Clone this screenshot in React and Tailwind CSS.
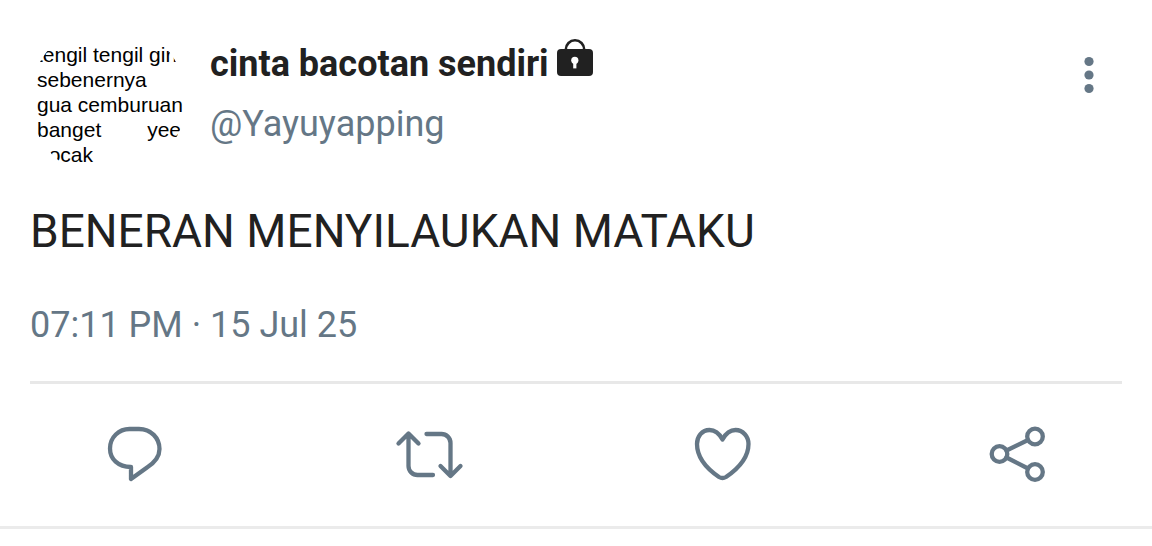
function Avatar() {
  return (
    <div className="size-[156px] shrink-0 overflow-hidden rounded-full bg-white pt-5 pl-[7px] font-['Liberation_Sans',Arial,sans-serif] text-[21px] leading-[25px] whitespace-nowrap text-black">
      <p>tengil tengil girl</p>
      <p>sebenernya</p>
      <p>gua cemburuan</p>
      <p className="flex w-36 justify-between">
        <span>banget</span>
        <span>yee</span>
      </p>
      <p>bocak</p>
    </div>
  );
}

function LockIcon() {
  return (
    <svg viewBox="0 0 36 38" className="h-[38px] w-9" role="img" aria-label="Protected account">
      <path d="M8.8 12V10.5a9.2 9.2 0 0 1 18.400 0V12" fill="none" stroke="#212121" strokeWidth="2.6" />
      <rect x="0" y="10" width="36" height="27" rx="4" fill="#212121" />
      <circle cx="17.8" cy="21.3" r="3.6" fill="#fff" />
      <path d="M16.2 22h3.2v7.4h-3.2z" fill="#fff" />
    </svg>
  );
}

function Action({ label, children }) {
  return (
    <button type="button" aria-label={label} className="text-[#657786]">
      <svg
        viewBox="0 0 60 60"
        className="size-[60px] overflow-visible"
        fill="none"
        stroke="currentColor"
        strokeWidth="4.3"
        strokeLinecap="round"
        strokeLinejoin="round"
      >
        {children}
      </svg>
    </button>
  );
}

export default function App() {
  return (
    <main className="bg-white font-[Roboto,sans-serif] text-[#212121]">
      <article className="border-b-3 border-[#ebebeb]">
        <div className="px-[30px] pt-[22px]">
          <header className="flex items-start gap-6">
            <Avatar />
            <div className="min-w-0 flex-1 pt-[17px]">
              <div className="flex items-start gap-2">
                <h1 className="pt-px text-[36px] leading-12 font-bold">cinta bacotan sendiri</h1>
                <LockIcon />
              </div>
              <p className="mt-3 text-[36px] leading-12 text-[#657786]">@Yayuyapping</p>
            </div>
            <button type="button" aria-label="More options" className="mt-[34px] mr-[27px] text-[#657786]">
              <svg viewBox="0 0 12 38" className="h-[38px] w-3" fill="currentColor">
                <circle cx="6" cy="5.5" r="4.6" />
                <circle cx="6" cy="19" r="4.6" />
                <circle cx="6" cy="32.5" r="4.6" />
              </svg>
            </button>
          </header>
          <p className="mt-[25px] text-[46px] leading-14">BENERAN MENYILAUKAN MATAKU</p>
          <time className="mt-[42px] block text-[36px] leading-12 text-[#657786]">07:11 PM · 15 Jul 25</time>
          <hr className="mt-8 border-t-3 border-[#e8e8e8]" />
        </div>
        <div className="flex justify-between px-[104px] pt-10 pb-[42px]">
          <Action label="Reply">
            <path d="M25.5 5H35C47 5 55.5 14 55.5 25C55.5 34 50 39 43 43.5L27 55V43C14 43 6 35 6 24.5C6 13 15 5 25.5 5Z" />
          </Action>
          <Action label="Retweet">
            <path d="M-.5 19.5L9.500 9.5L19.5 19.5M9.5 10V42a9 9 0 0 0 9 9H34M27.5 10H42.5a9 9 0 0 1 9 9V51M41.5 42L51.5 52L61.5 42" />
          </Action>
          <Action label="Like">
            <path d="M29.5 15.5C26 9 21 6 16.5 6C9 6 4 12.5 4 20C4 34 15 45.5 26 53Q29.5 55 33 53C44 45.5 55.5 34 55.5 20C55.5 12.5 50 6 42.5 6C37 6 33 9 29.5 15.5Z" />
          </Action>
          <Action label="Share">
            <circle cx="11.5" cy="30" r="7.8" />
            <circle cx="47" cy="12.5" r="7.8" />
            <circle cx="47" cy="48" r="7.8" />
            <path d="M18.5 26.5L40 16M18.5 33.5L40 44.5" />
          </Action>
        </div>
      </article>
    </main>
  );
}
